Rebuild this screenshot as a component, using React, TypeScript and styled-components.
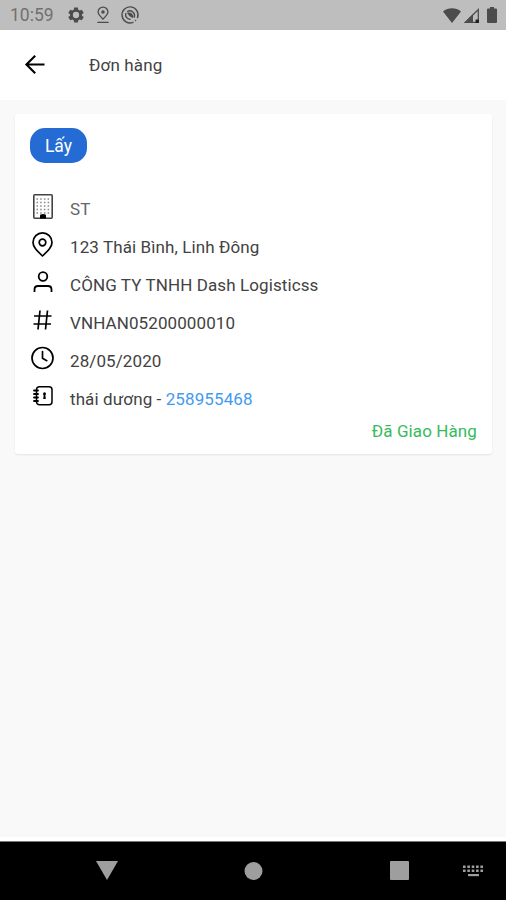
import React from 'react';
import styled, { createGlobalStyle } from 'styled-components';

const GlobalStyle = createGlobalStyle`
  * { box-sizing: border-box; }
  body { margin: 0; background: #f9f9f9; font-family: Roboto, sans-serif; }
  svg { display: block; flex: none; overflow: visible; }
`;

const Screen = styled.div`
  display: flex;
  flex-direction: column;
  width: 506px;
  height: 900px;
  background: #f9f9f9;
  color: #424242;
`;

const StatusBar = styled.header`
  display: flex;
  align-items: center;
  height: 30px;
  padding: 0 9px 0 10px;
  background: #bebebe;
  color: #4c4c4c;
`;

const Clock = styled.span`
  width: 57px;
  font-size: 17.5px;
  color: #707070;
`;

const StatusIcons = styled.div<{ $gap: number; $end?: boolean }>`
  display: flex;
  align-items: center;
  gap: ${(p) => p.$gap}px;
  margin-left: ${(p) => (p.$end ? 'auto' : '0')};
`;

const BatterySlot = styled.span`
  margin-left: 5px;
`;

const AppBar = styled.div`
  display: flex;
  align-items: center;
  height: 70px;
  padding-left: 25px;
  background: #fff;
`;

const BackButton = styled.button`
  display: flex;
  width: 64px;
  padding: 0;
  border: 0;
  background: none;
  color: #000;
`;

const Title = styled.h1`
  margin: 0;
  font-size: 17px;
  font-weight: 400;
  letter-spacing: 0.15px;
`;

const Main = styled.main`
  flex: 1;
  padding: 14px 14px 0 15px;
`;

const Card = styled.article`
  display: flex;
  flex-direction: column;
  height: 340px;
  padding: 14px 15px 0;
  border-radius: 3px;
  background: #fff;
  box-shadow: 0 1px 2px rgba(0, 0, 0, 0.09);
`;

const Badge = styled.span`
  display: flex;
  align-items: center;
  justify-content: center;
  width: 57px;
  height: 35px;
  margin-bottom: 27px;
  border-radius: 15px;
  background: #246bd3;
  color: #fff;
  font-size: 17.5px;
`;

const Rows = styled.ul`
  margin: 0;
  padding: 0;
  list-style: none;
`;

const Row = styled.li`
  display: flex;
  height: 38px;
  color: #000;
`;

const IconSlot = styled.span`
  display: flex;
  align-items: center;
  justify-content: center;
  width: 25px;
  height: 32px;
`;

const RowText = styled.span<{ $muted?: boolean }>`
  margin-left: 15px;
  font-size: 17px;
  line-height: 39px;
  letter-spacing: 0.1px;
  white-space: nowrap;
  color: ${(p) => (p.$muted ? '#666' : '#424242')};
`;

const Phone = styled.span`
  color: #439af0;
`;

const Status = styled.span`
  align-self: flex-end;
  margin-top: 1px;
  font-size: 17px;
  line-height: 24px;
  letter-spacing: 0.1px;
  color: #36bb5c;
`;

const NavBar = styled.nav`
  display: grid;
  grid-template-columns: 34px 146px 146px 146px 34px;
  align-items: center;
  height: 63px;
  border-top: 4px solid #fff;
  background: #000;
  box-shadow: inset 0 1px 0 #777;
  color: #9e9e9e;
`;

const NavItem = styled.span`
  display: flex;
  align-items: center;
  justify-content: center;
`;

const KeyboardSlot = styled.span`
  margin-left: -9px;
`;

const line = { fill: 'none', stroke: 'currentColor', strokeLinecap: 'round', strokeLinejoin: 'round' } as const;

const Gear = () => (
  <svg width="18" height="18" viewBox="0 0 24 24">
    <path fill="currentColor" fillRule="evenodd" d="M9.5 2h5l.5 3 2 1.1 2.8-1.1 2.5 4.2-2.4 1.8v2l2.4 1.8-2.5 4.2-2.8-1.1-2 1.1-.5 3h-5L9 19l-2-1.1L4.200 19l-2.500-4.200L4.100 13v-2L1.700 9.200 4.200 5 7 6.100 9 5z M12 7.800a4.200 4.200 0 1 0 0 8.400a4.200 4.200 0 1 0 0-8.400z" />
  </svg>
);

const PinLine = () => (
  <svg width="12" height="16" viewBox="0 0 12 16" {...line} strokeWidth="1.3">
    <path d="M6 12.200C3.500 9.300 1.100 7.400 1.100 5a4.900 4.900 0 0 1 9.800 0C10.900 7.400 8.500 9.300 6 12.200zM.8 15.300h10.400" />
    <circle cx="6" cy="5" r="1.100" fill="currentColor" />
  </svg>
);

const Swirl = () => (
  <svg width="18" height="18" viewBox="0 0 18 18" {...line} strokeWidth="1.400">
    <path d="M12 16.300A8 8 0 1 1 16.500 11.700" />
    <path d="M9 13.300A4.500 4.500 0 0 1 4.800 7.500M6.500 5.500A4.700 4.700 0 0 1 13.300 11" />
    <path fill="currentColor" d="M7 7.300c2.800-.7 4.300 1 4.700 3.900L9 9.600z" />
    <path d="M14.500 14.500h.1" />
  </svg>
);

const Wifi = () => (
  <svg width="18" height="15" viewBox="0 0 18 15">
    <path fill="currentColor" d="M0 3.500C5-.8 13-.8 18 3.500L9 15z" />
  </svg>
);

const Signal = () => (
  <svg width="15" height="15" viewBox="0 0 15 15">
    <path fill="none" stroke="currentColor" strokeWidth="1.300" d="M1.500 14.300L14.300 1.500v12.800z" />
    <path fill="currentColor" d="M0 15L9 6v9z" />
    <path fill="#222" d="M11.500 11.500H15V15h-3.500z" />
  </svg>
);

const Battery = () => (
  <svg width="10" height="16" viewBox="0 0 10 16">
    <path fill="currentColor" d="M3 0h4v1.500h2q1 0 1 1V15q0 1-1 1H1q-1 0-1-1V2.500q0-1 1-1h2z" />
  </svg>
);

const Back = () => (
  <svg width="20" height="20" viewBox="0 0 20 20" {...line} strokeWidth="2.100" strokeLinecap="butt" strokeLinejoin="miter">
    <path d="M19.500 9.500H2M10.200 .7L1.400 9.500l8.800 8.800" />
  </svg>
);

const Building = () => (
  <svg width="20" height="25" viewBox="0 0 20 25">
    <rect x=".8" y=".8" width="18.400" height="23.400" rx="1" fill="none" stroke="#444" strokeWidth="1.600" />
    <path d="M3.500 5h13M3.500 8.500h13M3.500 12h13M3.500 15.500h13M3.500 19h13" stroke="#888" strokeWidth="1.500" strokeDasharray="1.500 2.200" />
    <path d="M7 24.500v-3q0-1.500 3-1.500t3 1.500v3z" fill="#000" />
  </svg>
);

const Pin = () => (
  <svg width="21" height="25" viewBox="0 0 21 25" {...line} strokeWidth="1.700">
    <path d="M10.500 24C5 18.700 1 15 1 10.400a9.500 9.500 0 0 1 19 0C20 15 16 18.700 10.500 24z" />
    <circle cx="10.500" cy="10.500" r="3.300" />
  </svg>
);

const Person = () => (
  <svg width="20" height="22" viewBox="0 0 20 22" {...line} strokeWidth="1.800" strokeLinecap="butt">
    <circle cx="10" cy="5.500" r="4.300" />
    <path d="M1.500 21v-2.500q0-3.500 3.500-3.500h10q3.500 0 3.500 3.500v2.500" />
  </svg>
);

const Hash = () => (
  <svg width="19" height="20" viewBox="0 0 19 20" {...line} strokeWidth="1.700" strokeLinecap="butt">
    <path d="M1 6h17.500M.5 14H18M7 .5l-2 19M14.500 .5l-2 19" />
  </svg>
);

const Time = () => (
  <svg width="23" height="23" viewBox="0 0 23 23" {...line} strokeWidth="1.700">
    <circle cx="11.500" cy="11" r="10.500" />
    <path d="M11.500 4.500v6.800l4.300 2.400" />
  </svg>
);

const Contacts = () => (
  <svg width="20" height="20" viewBox="0 0 20 20" {...line} strokeWidth="1.500">
    <rect x="3.500" y=".8" width="15.500" height="18" rx="3" />
    <path d="M1 4.500h4M1 8h4M1 11.500h4M1 15h4" strokeWidth="1.800" />
    <circle cx="11.500" cy="7.800" r="1.500" fill="currentColor" stroke="none" />
    <path d="M10.700 9h1.600l.5 4h-2.600z" fill="currentColor" stroke="none" />
  </svg>
);

const Keyboard = () => (
  <svg width="20" height="12" viewBox="0 0 20 12">
    <path d="M0 1.800h20M0 5.800h20" stroke="currentColor" strokeWidth="2.600" strokeDasharray="2.600 1.750" />
    <path d="M5 9h11v2.200H5z" fill="currentColor" />
  </svg>
);

const rows = [
  { icon: <Building />, text: 'ST', muted: true },
  { icon: <Pin />, text: '123 Thái Bình, Linh Đông' },
  { icon: <Person />, text: 'CÔNG TY TNHH Dash Logisticss' },
  { icon: <Hash />, text: 'VNHAN05200000010' },
  { icon: <Time />, text: '28/05/2020' },
  { icon: <Contacts />, text: 'thái dương - ', phone: '258955468' },
];

export default function App() {
  return (
    <Screen>
      <GlobalStyle />
      <StatusBar>
        <Clock>10:59</Clock>
        <StatusIcons $gap={12}>
          <Gear />
          <PinLine />
          <Swirl />
        </StatusIcons>
        <StatusIcons $gap={3} $end>
          <Wifi />
          <Signal />
          <BatterySlot><Battery /></BatterySlot>
        </StatusIcons>
      </StatusBar>
      <AppBar>
        <BackButton aria-label="Back"><Back /></BackButton>
        <Title>Đơn hàng</Title>
      </AppBar>
      <Main>
        <Card>
          <Badge>Lấy</Badge>
          <Rows>
            {rows.map((r) => (
              <Row key={r.text}>
                <IconSlot>{r.icon}</IconSlot>
                <RowText $muted={r.muted}>
                  {r.text}
                  {r.phone && <Phone>{r.phone}</Phone>}
                </RowText>
              </Row>
            ))}
          </Rows>
          <Status>Đã Giao Hàng</Status>
        </Card>
      </Main>
      <NavBar>
        <span />
        <NavItem>
          <svg width="22" height="19" viewBox="0 0 22 19"><path fill="currentColor" d="M0 0h22L11 19z" /></svg>
        </NavItem>
        <NavItem>
          <svg width="18" height="18" viewBox="0 0 18 18"><circle cx="9.500" cy="9" r="9" fill="currentColor" /></svg>
        </NavItem>
        <NavItem>
          <svg width="19" height="19" viewBox="0 0 19 19"><rect width="19" height="19" rx="1" fill="currentColor" /></svg>
        </NavItem>
        <KeyboardSlot><Keyboard /></KeyboardSlot>
      </NavBar>
    </Screen>
  );
}
